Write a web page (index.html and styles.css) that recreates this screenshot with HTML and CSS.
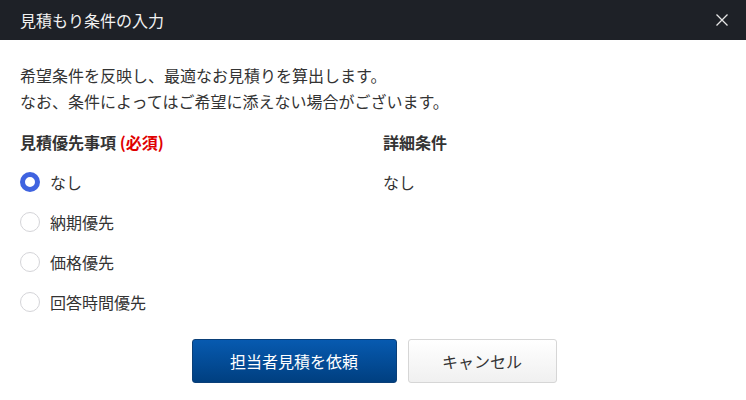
FILE: index.html
```html
<!DOCTYPE html>
<html lang="ja">
<head>
    <meta charset="utf-8">
    <title>見積もり条件の入力</title>
    <link rel="stylesheet" href="styles.css">
</head>
<body>
    <div class="dialog">
        <div class="dialog-header">
            <span class="dialog-title">見積もり条件の入力</span>
            <span class="close-btn">
                <svg width="14" height="14" viewBox="0 0 14 14"><path d="M1.5 1.5L12.5 12.5M12.5 1.5L1.5 12.5" stroke="#e6e6e6" stroke-width="1.3" fill="none"/></svg>
            </span>
        </div>
        <div class="dialog-body">
            <p class="lead">希望条件を反映し、最適なお見積りを算出します。<br>なお、条件によってはご希望に添えない場合がございます。</p>
            <div class="columns">
                <div class="col-main">
                    <div class="col-title">見積優先事項 <span class="required">(必須)</span></div>
                    <label class="radio-row"><span class="radio checked"></span>なし</label>
                    <label class="radio-row"><span class="radio"></span>納期優先</label>
                    <label class="radio-row"><span class="radio"></span>価格優先</label>
                    <label class="radio-row"><span class="radio"></span>回答時間優先</label>
                </div>
                <div class="col-detail">
                    <div class="col-title">詳細条件</div>
                    <div class="detail-row">なし</div>
                </div>
            </div>
            <div class="actions">
                <button class="btn btn-primary">担当者見積を依頼</button>
                <button class="btn btn-cancel">キャンセル</button>
            </div>
        </div>
    </div>
</body>
</html>
```

FILE: styles.css
```css
html, body {
    margin: 0;
    height: 100%;
    background-color: #fff;
    font-family: "Noto Sans CJK JP", "Noto Sans", sans-serif;
    color: #333;
}
.dialog {
    width: 746px;
}
.dialog-header {
    height: 40px;
    background-color: #1e2127;
    display: flex;
    align-items: center;
    justify-content: space-between;
    padding: 0 17px 0 20px;
}
.dialog-title {
    color: #f2f2f2;
    font-size: 16px;
    line-height: 40px;
}
.close-btn {
    display: flex;
    align-items: center;
}
.dialog-body {
    padding: 22px 20px 0 20px;
}
.lead {
    margin: 0;
    font-size: 16px;
    line-height: 26px;
}
.columns {
    display: flex;
    margin-top: 16px;
}
.col-main {
    width: 363px;
}
.col-title {
    font-size: 16px;
    font-weight: bold;
    line-height: 24px;
    margin-bottom: 8px;
}
.required {
    color: #e00000;
}
.radio-row {
    display: flex;
    align-items: center;
    height: 40px;
    font-size: 16px;
}
.radio {
    width: 18px;
    height: 18px;
    border: 1px solid #d4d4d8;
    border-radius: 50%;
    margin-right: 10px;
    box-sizing: content-box;
}
.radio.checked {
    width: 10px;
    height: 10px;
    border: 5px solid #3f63e0;
}
.detail-row {
    height: 40px;
    line-height: 40px;
    font-size: 16px;
}
.actions {
    display: flex;
    justify-content: center;
    gap: 11px;
    margin-top: 17px;
    padding-left: 2px;
}
.btn {
    height: 44px;
    font-family: inherit;
    font-size: 16px;
    border-radius: 3px;
    cursor: pointer;
}
.btn-primary {
    width: 205px;
    color: #fff;
    border: 1px solid #0a3f78;
    background: linear-gradient(#075ab0, #003f80);
}
.btn-cancel {
    width: 149px;
    color: #333;
    border: 1px solid #d6d6d6;
    background: linear-gradient(#ffffff, #f0f0f0);
}
```
